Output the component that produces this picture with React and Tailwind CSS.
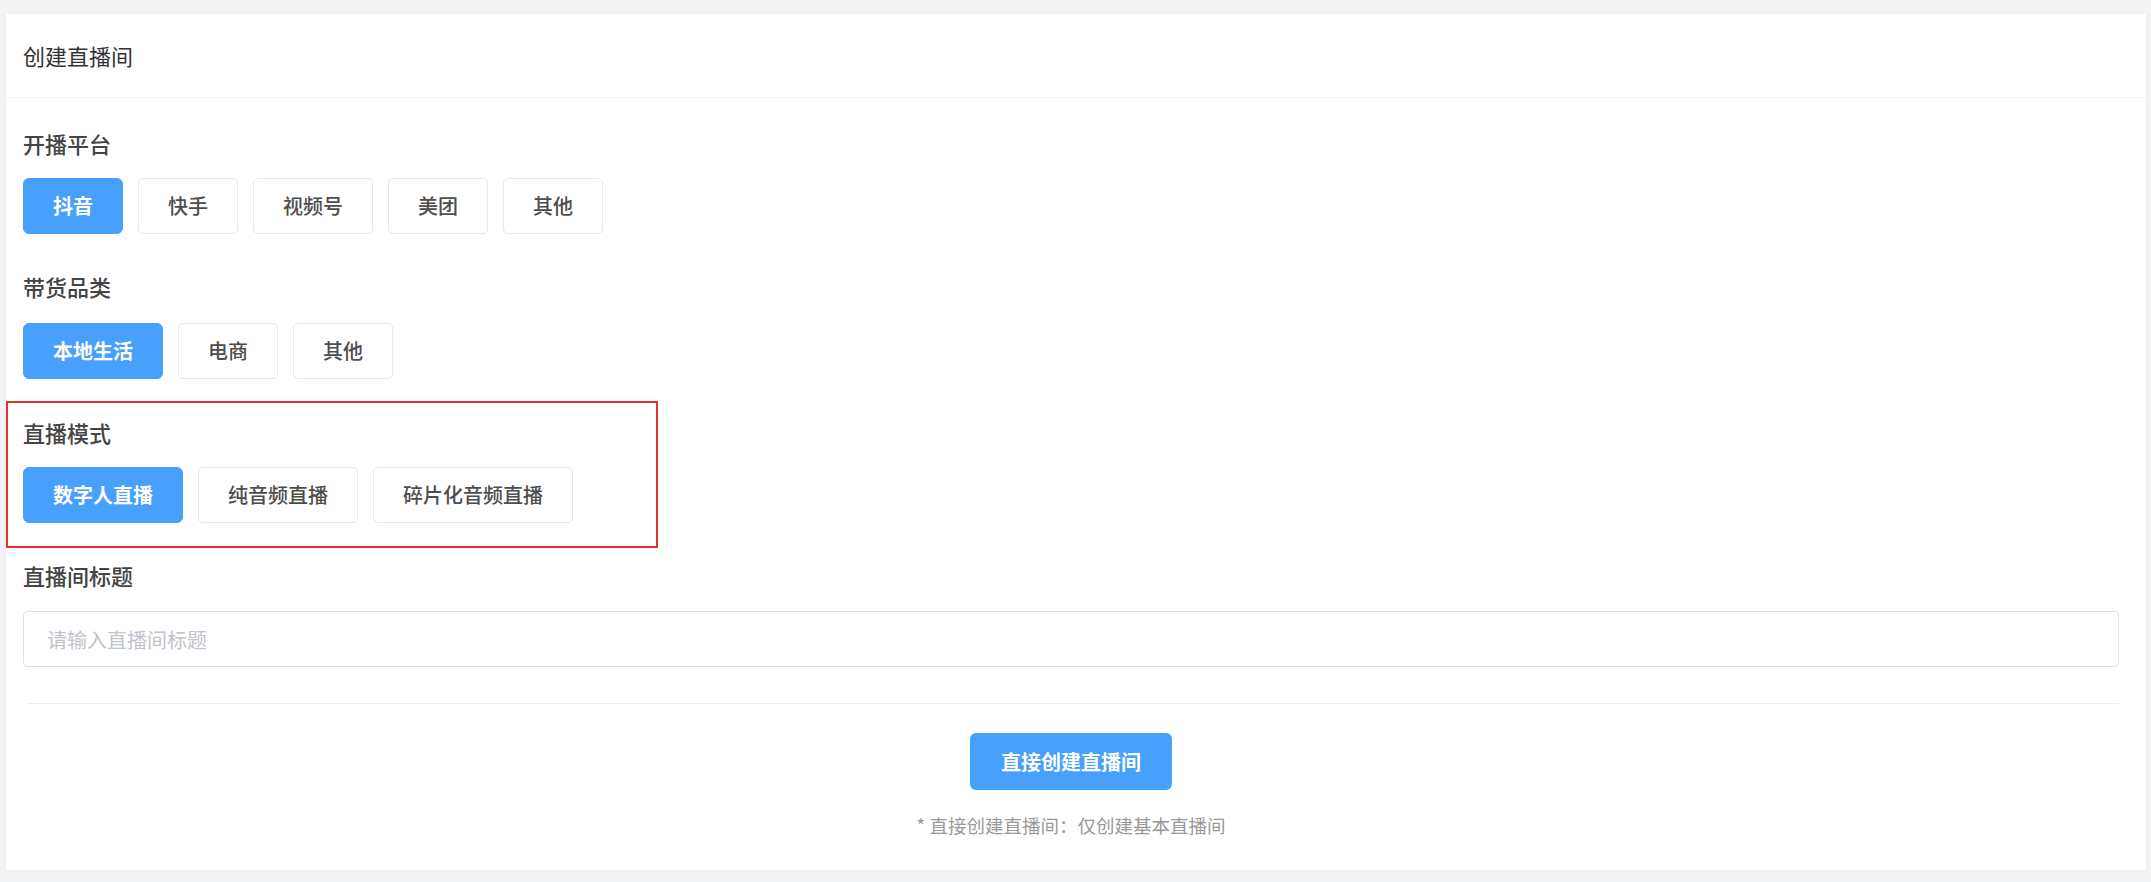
import React, { useState } from 'react';

const platforms = ['抖音', '快手', '视频号', '美团', '其他'];
const categories = ['本地生活', '电商', '其他'];
const modes = ['数字人直播', '纯音频直播', '碎片化音频直播'];

function OptionButton({ label, active, onClick }) {
  return (
    <button
      type="button"
      onClick={onClick}
      className={
        active
          ? 'h-[56px] px-[29px] rounded-[6px] border border-[#46a0fc] bg-[#46a0fc] text-white text-[20px] font-semibold'
          : 'h-[56px] px-[29px] rounded-[5px] border border-[#e4e7ed] bg-white text-[#4d4d4d] text-[20px] font-medium'
      }
    >
      {label}
    </button>
  );
}

function Label({ children }) {
  return <div className="h-[30px] leading-[30px] text-[22px] font-medium text-[#444]">{children}</div>;
}

export default function App() {
  const [platform, setPlatform] = useState(0);
  const [category, setCategory] = useState(0);
  const [mode, setMode] = useState(0);

  return (
    <div
      className="min-h-[882px] bg-[#f2f3f5] pt-[14px] pb-[12px] pl-[6px] pr-[5px]"
      style={{ fontFamily: "'Noto Sans CJK SC', 'Noto Sans', sans-serif" }}
    >
      <div className="h-[856px] bg-white shadow-[0_0_4px_rgba(0,0,0,0.04)] flex flex-col">
        {/* Header */}
        <div className="h-[84px] shrink-0 flex items-center px-[17px] border-b border-[#eef0f3] text-[22px] text-[#333]">
          创建直播间
        </div>

        {/* Body */}
        <div className="pl-[17px] pr-[27px] pt-[30px] flex flex-col">
          <Label>开播平台</Label>
          <div className="mt-[20px] flex gap-[15px]">
            {platforms.map((p, i) => (
              <OptionButton key={p} label={p} active={platform === i} onClick={() => setPlatform(i)} />
            ))}
          </div>

          <div className="mt-[37px]">
            <Label>带货品类</Label>
          </div>
          <div className="mt-[22px] flex gap-[15px]">
            {categories.map((c, i) => (
              <OptionButton key={c} label={c} active={category === i} onClick={() => setCategory(i)} />
            ))}
          </div>

          {/* highlighted section */}
          <div className="mt-[22px] ml-[-17px] w-[652px] h-[147px] border-[2px] border-[#e0332e] pl-[15px] pt-[14px]">
            <Label>直播模式</Label>
            <div className="mt-[20px] flex gap-[15px]">
              {modes.map((m, i) => (
                <OptionButton key={m} label={m} active={mode === i} onClick={() => setMode(i)} />
              ))}
            </div>
          </div>

          <div className="mt-[12px]">
            <Label>直播间标题</Label>
          </div>
          <input
            type="text"
            placeholder="请输入直播间标题"
            className="mt-[21px] h-[56px] w-full rounded-[4px] border border-[#dcdfe6] px-[23px] text-[20px] text-[#333] placeholder:text-[#c0c4cc] outline-none"
          />

          <div className="mt-[36px] ml-[5px] h-px bg-[#ebeef5]" />

          <div className="mt-[29px] flex flex-col items-center">
            <button
              type="button"
              className="h-[57px] px-[31px] rounded-[6px] bg-[#46a0fc] text-white text-[20px] font-semibold"
            >
              直接创建直播间
            </button>
            <div className="mt-[23px] h-[24px] leading-[24px] text-[18.5px] text-[#999]">
              * 直接创建直播间：仅创建基本直播间
            </div>
          </div>
        </div>
      </div>
    </div>
  );
}
